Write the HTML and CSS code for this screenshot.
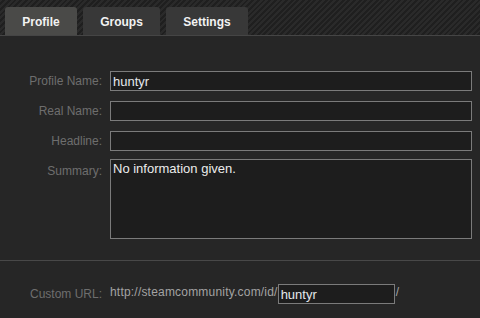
FILE: index.html
```html
<!DOCTYPE html>
<html lang="en">
<head>
    <meta charset="UTF-8">
    <meta name="viewport" content="width=device-width, initial-scale=1.0">
    <title>Edit Profile</title>
    <link rel="stylesheet" href="styles.css">
</head>
<body>

    <div class="tabs">
        <div class="tab tab-active">Profile</div>
        <div class="tab tab-groups">Groups</div>
        <div class="tab tab-settings">Settings</div>
    </div>

    <form class="profile-form">
        <div class="form-row">
            <label for="profileName">Profile Name:</label>
            <input type="text" id="profileName" value="huntyr">
        </div>
        <div class="form-row">
            <label for="realName">Real Name:</label>
            <input type="text" id="realName">
        </div>
        <div class="form-row">
            <label for="headline">Headline:</label>
            <input type="text" id="headline">
        </div>
        <div class="form-row form-row-top">
            <label for="summary">Summary:</label>
            <textarea id="summary">No information given.</textarea>
        </div>
    </form>

    <div class="divider"></div>

    <div class="url-row">
        <label for="customUrl">Custom URL:</label>
        <span class="url-prefix">http://steamcommunity.com/id/</span>
        <input type="text" id="customUrl" class="url-input" value="huntyr">
        <span class="url-suffix">/</span>
    </div>

</body>
</html>
```

FILE: styles.css
```css
body {
    font-family: "Liberation Sans", Arial, sans-serif;
    background-color: #262626;
    margin: 0;
    padding: 0;
    height: 318px;
    overflow: hidden;
}

.tabs {
    display: flex;
    align-items: flex-end;
    gap: 6px;
    height: 35px;
    padding-left: 5px;
    border-bottom: 1px solid #454545;
    background: repeating-linear-gradient(135deg, #2a2a2a 0px, #2a2a2a 2px, #1f1f1f 2px, #1f1f1f 4px);
}

.tab {
    box-sizing: border-box;
    height: 28px;
    padding-top: 1px;
    line-height: 28px;
    text-align: center;
    color: #f2f2f2;
    font-size: 12px;
    font-weight: bold;
    background-color: #383838;
    border-radius: 3px 3px 0 0;
}

.tab-active {
    width: 72px;
    background-color: #4a4a48;
}

.tab-groups {
    width: 77px;
}

.tab-settings {
    width: 82px;
}

.profile-form {
    padding-top: 35px;
}

.form-row {
    display: flex;
    align-items: center;
    margin-bottom: 10px;
}

.form-row-top {
    align-items: flex-start;
    margin-top: -2px;
    margin-bottom: 0;
}

.form-row label,
.url-row label {
    width: 102px;
    margin-right: 8px;
    text-align: right;
    color: #6e6e6e;
    font-size: 12px;
}

.form-row-top label {
    padding-top: 5px;
}

.form-row input,
.form-row textarea,
.url-input {
    box-sizing: border-box;
    width: 362px;
    height: 20px;
    margin: 0;
    padding: 0 2px;
    border: 1px solid #7b7b7b;
    background-color: #1d1d1d;
    color: #e4e8ec;
    font-family: "Liberation Sans", Arial, sans-serif;
    font-size: 13px;
    outline: none;
}

.form-row textarea {
    height: 80px;
    padding: 1px 2px;
    resize: none;
    color: #ececec;
}

.divider {
    margin-top: 21px;
    height: 1px;
    background-color: #484848;
}

.url-row {
    display: flex;
    align-items: center;
    margin-top: 23px;
}

.url-prefix,
.url-suffix {
    color: #a3a3a3;
    font-size: 12px;
    margin-top: -4px;
}

.url-prefix {
    letter-spacing: 0.2px;
}

.url-input {
    width: 117px;
}

.url-suffix {
    margin-left: 1px;
}
```
